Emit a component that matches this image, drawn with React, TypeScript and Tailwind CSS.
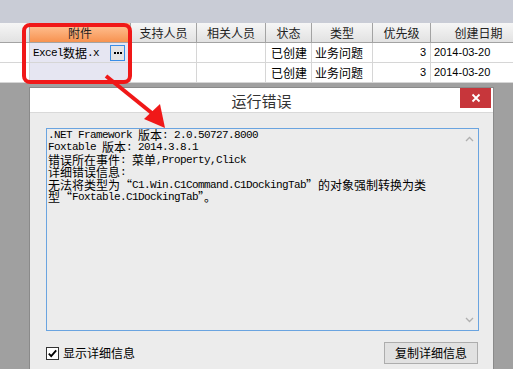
import React from 'react';

const colW = ['w-[30px]', 'w-[101px]', 'w-[66px]', 'w-[69px]', 'w-[46px]', 'w-[61px]', 'w-[58px]', 'w-[96px]'];
const headers = ['', '附件', '支持人员', '相关人员', '状态', '类型', '优先级', '创建日期'];

// SimSun-like mixed text: half-width latin at 6px, CJK at 12px
function Mono({ text }: { text: string }) {
  const parts = text.split(/([\u2018-\u201f\u3000-\u9fff\uff00-\uffef]+)/);
  return (
    <>
      {parts.map((s, i) =>
        i % 2 ? (
          <span
            key={i}
            className="inline-block align-top h-[12px] leading-[12px] font-['Noto_Sans_CJK_SC',sans-serif] text-[12px] tracking-normal"
          >
            {s}
          </span>
        ) : (
          <span key={i}>{s}</span>
        )
      )}
    </>
  );
}

function DataRow({ first }: { first: boolean }) {
  return (
    <div className="flex h-[20px] text-[12px] text-black font-['Noto_Sans_CJK_SC',sans-serif] leading-[19px]">
      <div className={`${colW[0]} shrink-0 bg-white border-r border-b border-[#d6d6d6]`} />
      <div className={`${colW[1]} shrink-0 bg-[#e6e6f2] border-r border-b border-[#d6d6d6] flex items-center pl-[3px]`}>
        {first && (
          <>
            <span className="font-['Liberation_Mono',monospace] text-[11px] leading-[12px] tracking-[-0.6px] whitespace-nowrap">
              <Mono text="Excel数据.x" />
            </span>
            <div className="ml-auto mr-[5px] w-[15px] h-[16px] border border-[#3a8ee6] bg-[#e4e4e4] flex items-center justify-center gap-[1px]">
              <div className="w-[2px] h-[2px] bg-black" />
              <div className="w-[2px] h-[2px] bg-black" />
              <div className="w-[2px] h-[2px] bg-black" />
            </div>
          </>
        )}
      </div>
      <div className={`${colW[2]} shrink-0 bg-white border-r border-b border-[#d6d6d6]`} />
      <div className={`${colW[3]} shrink-0 bg-white border-r border-b border-[#d6d6d6]`} />
      <div className={`${colW[4]} shrink-0 bg-white border-r border-b border-[#d6d6d6] pl-[5px]`}>已创建</div>
      <div className={`${colW[5]} shrink-0 bg-white border-r border-b border-[#d6d6d6] pl-[3px]`}>业务问题</div>
      <div className={`${colW[6]} shrink-0 bg-white border-r border-b border-[#d6d6d6] pr-[4px] text-right font-['Liberation_Sans',sans-serif] text-[11px]`}>
        3
      </div>
      <div className={`${colW[7]} shrink-0 bg-white border-b border-[#d6d6d6] pl-[3px] font-['Liberation_Sans',sans-serif] text-[11px]`}>
        2014-03-20
      </div>
    </div>
  );
}

const errorLines = [
  '.NET Framework 版本: 2.0.50727.8000',
  'Foxtable 版本: 2014.3.8.1',
  '错误所在事件: 菜单,Property,Click',
  '详细错误信息:',
  '无法将类型为“C1.Win.C1Command.C1DockingTab”的对象强制转换为类',
  '型“Foxtable.C1DockingTab”。',
];

export default function App() {
  return (
    <div className="relative w-[513px] h-[369px] overflow-hidden bg-[#a0a0a0] flex flex-col">
      <div className="h-[23px] shrink-0 bg-[#c9ccd6]" />

      {/* grid header */}
      <div className="flex h-[20px] shrink-0 text-[12px] text-[#222] font-['Noto_Sans_CJK_SC',sans-serif] leading-[19px]">
        {headers.map((h, i) => (
          <div
            key={i}
            className={`${colW[i]} shrink-0 text-center border-r border-b border-[#a3a3a3] ${
              i === 1 ? 'bg-gradient-to-b from-[#ffc699] to-[#f7924f]' : 'bg-gradient-to-b from-[#f6f6f6] to-[#e2e2e2]'
            }`}
          >
            {h}
          </div>
        ))}
      </div>
      <DataRow first />
      <DataRow first={false} />

      {/* dialog area */}
      <div className="flex-1 pl-[29px] pt-[4px] flex">
        <div className="w-[465px] h-full flex flex-col bg-[#ececec] border-l border-t border-r border-[#8a8a8a]">
          <div className="relative h-[25px] shrink-0 bg-white border-b border-[#d9d9d9] flex items-center justify-center">
            <span className="text-[15px] text-[#333] font-['Noto_Sans_CJK_SC',sans-serif] leading-none">运行错误</span>
            <div className="absolute right-[2px] top-0 w-[31px] h-[20px] bg-[#c7363b] flex items-center justify-center">
              <svg width="10" height="10" viewBox="0 0 10 10">
                <path d="M1.5 1.5 L8.5 8.5 M8.5 1.5 L1.5 8.5" stroke="#fff" strokeWidth="1.8" />
              </svg>
            </div>
          </div>

          <div className="ml-[16px] mt-[15px] w-[433px] h-[203px] shrink-0 border border-[#6aa4e0] flex">
            <div className="flex-1 pl-[1px] font-['Liberation_Mono',monospace] text-[11px] tracking-[-0.6px] leading-[12.4px] text-black whitespace-nowrap">
              {errorLines.map((l, i) => (
                <div key={i} className="h-[12.4px]">
                  <Mono text={l} />
                </div>
              ))}
            </div>
            <div className="w-[17px] flex flex-col items-center justify-between py-[7px]">
              <svg width="9" height="6" viewBox="0 0 9 6">
                <path d="M1 5 L4.5 1.5 L8 5" stroke="#b0b0b0" strokeWidth="1.3" fill="none" />
              </svg>
              <svg width="9" height="6" viewBox="0 0 9 6">
                <path d="M1 1 L4.5 4.5 L8 1" stroke="#b0b0b0" strokeWidth="1.3" fill="none" />
              </svg>
            </div>
          </div>

          <div className="ml-[16px] mt-[11px] w-[433px] flex items-center justify-between">
            <div className="flex items-center gap-[4px]">
              <svg width="13" height="13" viewBox="0 0 13 13">
                <rect x="0.5" y="0.5" width="12" height="12" fill="#fff" stroke="#333" />
                <path d="M2.8 6.6 L5.2 9.2 L10.2 3.4" stroke="#000" strokeWidth="1.8" fill="none" />
              </svg>
              <span className="text-[12px] text-black font-['Noto_Sans_CJK_SC',sans-serif]">显示详细信息</span>
            </div>
            <div className="mr-[1px] w-[94px] h-[22px] border border-[#adadad] bg-[#e1e1e1] flex items-center justify-center text-[12px] text-black font-['Noto_Sans_CJK_SC',sans-serif]">
              复制详细信息
            </div>
          </div>
        </div>
      </div>

      {/* annotation overlay */}
      <svg className="absolute left-0 top-0 pointer-events-none" width="513" height="369" viewBox="0 0 513 369">
        <rect x="24" y="25" width="106" height="57" rx="6" fill="none" stroke="#f01818" strokeWidth="4" />
        <path d="M106 76 L153 114" stroke="#f01818" strokeWidth="4" />
        <polygon points="165,128 144,119 160,104" fill="#f01818" />
      </svg>
    </div>
  );
}
